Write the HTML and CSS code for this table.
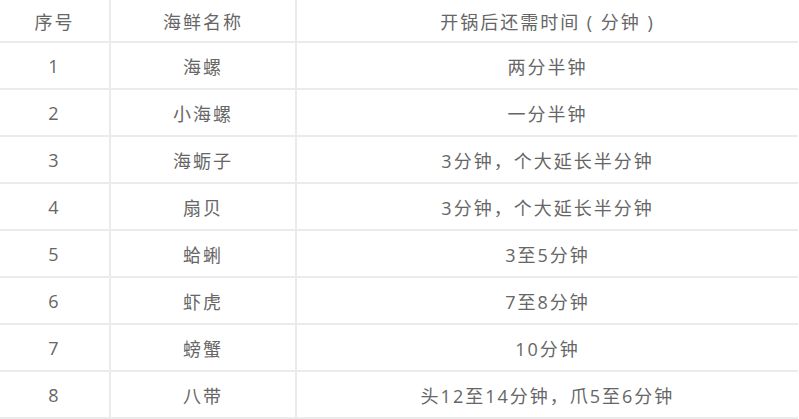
FILE: index.html
```html
<!DOCTYPE html>
<html lang="zh">
<head>
<meta charset="utf-8">
<link rel="stylesheet" href="styles.css">
</head>
<body>
<table class="tbl">
  <colgroup><col class="c1"><col class="c2"><col class="c3"></colgroup>
  <thead>
    <tr><th>序号</th><th>海鲜名称</th><th>开锅后还需时间 ( 分钟 )</th></tr>
  </thead>
  <tbody>
    <tr><td>1</td><td>海螺</td><td>两分半钟</td></tr>
    <tr><td>2</td><td>小海螺</td><td>一分半钟</td></tr>
    <tr><td>3</td><td>海蛎子</td><td>3分钟，个大延长半分钟</td></tr>
    <tr><td>4</td><td>扇贝</td><td>3分钟，个大延长半分钟</td></tr>
    <tr><td>5</td><td>蛤蜊</td><td>3至5分钟</td></tr>
    <tr><td>6</td><td>虾虎</td><td>7至8分钟</td></tr>
    <tr><td>7</td><td>螃蟹</td><td>10分钟</td></tr>
    <tr><td>8</td><td>八带</td><td>头12至14分钟，爪5至6分钟</td></tr>
  </tbody>
</table>
</body>
</html>
```
FILE: styles.css
```css
html, body { margin: 0; padding: 0; background: #fff; }
.tbl {
  border-collapse: collapse;
  width: 798px;
  table-layout: fixed;
  font-family: "Open Sans", "Noto Sans CJK SC", sans-serif;
  font-size: 18px;
  color: #666;
  letter-spacing: 2px;
}
.c1 { width: 110px; }
.c2 { width: 186px; }
.tbl th, .tbl td {
  font-weight: normal;
  text-align: center;
  padding: 0;
  border-bottom: 2px solid #ebebeb;
  border-left: 2px solid #ebebeb;
}
.tbl th:first-child, .tbl td:first-child { border-left: none; }
.tbl th { height: 41px; }
.tbl td { height: 45px; }
```
